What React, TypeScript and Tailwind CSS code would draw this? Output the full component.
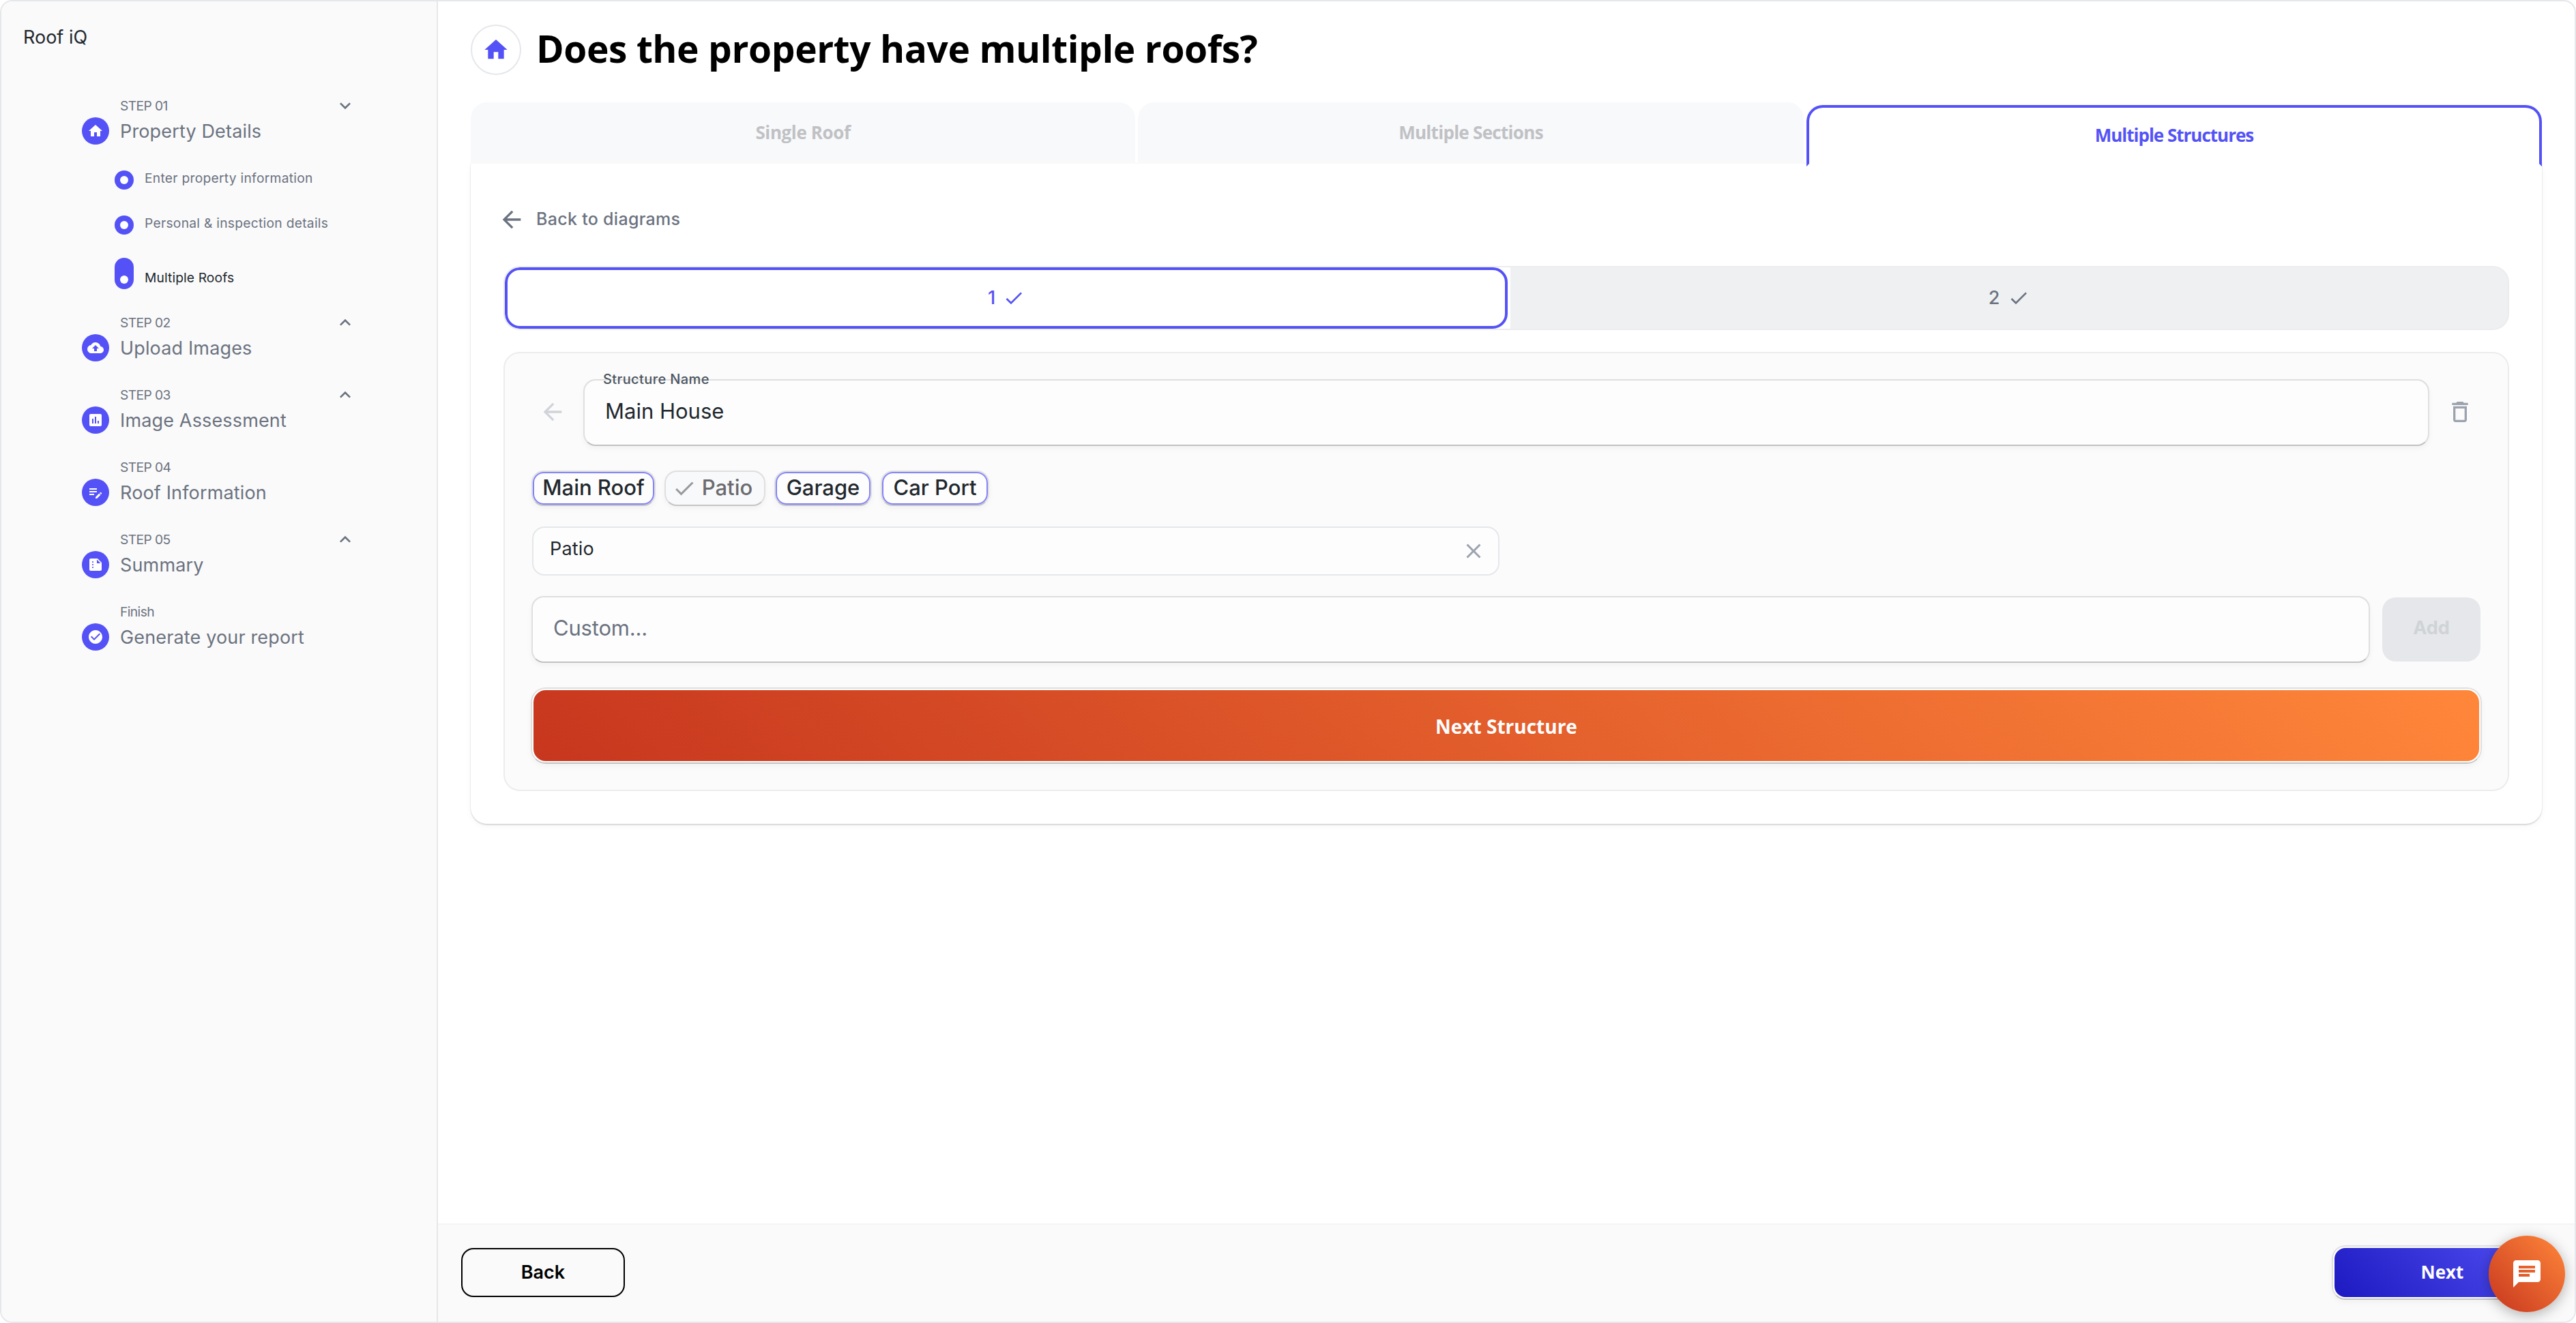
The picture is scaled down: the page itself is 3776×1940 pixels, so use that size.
import type { ReactNode } from "react";
import clsx from "clsx";
import type { IconType } from "react-icons";
import {
  MdArrowBack,
  MdAssessment,
  MdChat,
  MdCheck,
  MdCheckCircle,
  MdClose,
  MdCloudUpload,
  MdDeleteOutline,
  MdEditNote,
  MdExpandLess,
  MdExpandMore,
  MdHome,
  MdSummarize,
} from "react-icons/md";

interface SubStep {
  title: string;
  active?: boolean;
}

interface Step {
  label: string;
  title: string;
  icon: IconType;
  expandable?: boolean;
  children?: SubStep[];
}

const steps: Step[] = [
  {
    label: "STEP 01",
    title: "Property Details",
    icon: MdHome,
    expandable: true,
    children: [
      { title: "Enter property information" },
      { title: "Personal & inspection details" },
      { title: "Multiple Roofs", active: true },
    ],
  },
  { label: "STEP 02", title: "Upload Images", icon: MdCloudUpload, expandable: true },
  { label: "STEP 03", title: "Image Assessment", icon: MdAssessment, expandable: true },
  { label: "STEP 04", title: "Roof Information", icon: MdEditNote },
  { label: "STEP 05", title: "Summary", icon: MdSummarize, expandable: true },
  { label: "Finish", title: "Generate your report", icon: MdCheckCircle },
];

const SubStepItem = ({ title, active }: SubStep) => (
  <li className="flex items-start gap-4">
    <span
      className={clsx(
        "flex w-7 justify-center rounded-full bg-[#5452f6]",
        active ? "h-[46px] items-end pb-2" : "h-7 items-center"
      )}
    >
      <span className="size-3 rounded-full bg-white" />
    </span>
    <span
      className={clsx(
        "text-[19.25px] leading-[22px]",
        active ? "mt-[18px] tracking-[0.1px] text-[#22282e]" : "tracking-[0.26px] text-[#6b7280]"
      )}
    >
      {title}
    </span>
  </li>
);

const StepItem = ({ label, title, icon: Icon, expandable, children }: Step) => {
  const Chevron = children ? MdExpandMore : MdExpandLess;

  return (
    <li>
      <div className="ml-[118px] w-[402px]">
        <div className="flex h-[34px] items-center justify-between pl-14 text-[#6b7280]">
          <span className="text-[19.25px] tracking-[-0.6px]">{label}</span>
          {expandable && <Chevron className="size-8" />}
        </div>
        <div className="flex h-10 items-center gap-4">
          <span className="flex size-10 items-center justify-center rounded-full bg-[#5452f6]">
            <Icon className="size-6 text-white" />
          </span>
          <span className="pt-0.5 text-[27px] tracking-[0.15px] text-[#6b7280]">{title}</span>
        </div>
      </div>
      {children && (
        <ul className="ml-[166px] flex flex-col pt-[38px] [&>li:nth-child(2)]:mt-[38px] [&>li:nth-child(3)]:mt-[34px]">
          {children.map((child) => (
            <SubStepItem key={child.title} {...child} />
          ))}
        </ul>
      )}
    </li>
  );
};

const Sidebar = () => (
  <aside className="w-[640px] shrink-0 border-r-2 border-[#e5e7eb] bg-[#fafafa] pt-[33px]">
    <p className="pl-8 text-[27px] leading-10 text-[#22282e]">Roof iQ</p>
    <ul className="mt-[63px] flex flex-col gap-8">
      {steps.map((step) => (
        <StepItem key={step.label} {...step} />
      ))}
    </ul>
  </aside>
);

const chips = [
  { name: "Main Roof", width: "w-[182px]" },
  { name: "Patio", width: "w-[148px]", added: true },
  { name: "Garage", width: "w-[143px]" },
  { name: "Car Port", width: "w-[159px]" },
];

const Chip = ({ name, width, added }: { name: string; width: string; added?: boolean }) => (
  <button
    className={clsx(
      "h-[52px] rounded-[18px] border-2 border-[#dfdfe0] border-b-[#c4c4c4] text-[31px] font-medium shadow-[0_4px_8px_rgba(0,0,0,0.04)]",
      width,
      added ? "bg-[#f8f9fb] text-[#6b6b6e]" : "bg-[#fdfdfd] text-[#22282e]"
    )}
  >
    <span
      className={clsx(
        "flex h-12 items-center justify-center rounded-2xl pb-[3px] leading-none whitespace-nowrap",
        added ? "pr-2" : "border-2 border-[#8583f8]"
      )}
    >
      {added && <MdCheck className="mt-[3px] mr-2 size-9 shrink-0 text-[#97999c]" />}
      {name}
    </span>
  </button>
);

const Field = ({ className, children }: { className?: string; children: ReactNode }) => (
  <div
    className={clsx(
      "flex h-[98px] flex-1 rounded-[18px] border-2 border-[#dfdfe0] border-b-[#c2c2c2] bg-[#fdfdfd] text-[31px] shadow-[0_4px_8px_rgba(0,0,0,0.04)]",
      className
    )}
  >
    {children}
  </div>
);

const StructureForm = () => (
  <section className="mt-8 h-[644px] rounded-3xl border-2 border-[#ececec] bg-[#fbfbfb] pt-[38px]">
    <div className="flex items-center gap-[25px] px-[50px]">
      <MdArrowBack className="mb-0.5 size-10 text-[#d0d3d8]" />
      <Field className="relative">
        <label className="absolute top-[-14px] left-[27px] text-[20px] leading-6 font-medium tracking-[0.4px] text-[#4b5560]">
          Structure Name
        </label>
        <span className="pt-[25px] pl-[30px] leading-10 text-[#22282e]">Main House</span>
      </Field>
      <MdDeleteOutline className="mb-0.5 size-10 text-[#9ca3af]" />
    </div>

    <div className="mt-9 ml-[39px] flex gap-[13px]">
      {chips.map((chip) => (
        <Chip key={chip.name} {...chip} />
      ))}
    </div>

    <div className="mt-[30px] ml-10 flex h-[72px] w-[1418px] justify-between rounded-[18px] border-2 border-[#e5e7eb] bg-[#fdfdfd] pr-[18px] pl-6">
      <span className="pt-[11px] text-[27px] leading-10 tracking-[0.2px] text-[#22282e]">Patio</span>
      <MdClose className="mt-4 size-9 text-[#9ca3af]" />
    </div>

    <div className="mt-[30px] mr-10 ml-[39px] flex items-center gap-[18px]">
      <Field>
        <span className="pt-[25px] pl-[30px] leading-10 tracking-[-0.2px] text-[#6b7280]">Custom...</span>
      </Field>
      <button className="h-[94px] w-36 rounded-[20px] bg-[#e5e7eb] pb-1 text-[27px] font-bold text-[#d0d3d6]">
        Add
      </button>
    </div>

    <div className="mx-[38px] mt-9 rounded-[22px] border-2 border-[#dfdfe0] border-b-[#c2c2c2] shadow-[0_4px_8px_rgba(0,0,0,0.04)]">
      <button className="block h-[108px] w-full rounded-[20px] border-2 border-white bg-[linear-gradient(45deg,#c7361e,#ff873a)] bg-origin-border pt-0.5 font-['Open_Sans',sans-serif] text-[28px] font-bold text-white">
        Next Structure
      </button>
    </div>
  </section>
);

const StructureTabs = () => (
  <div className="mt-12 flex h-[94px] overflow-hidden rounded-3xl border-2 border-[#ececee] bg-[#eff0f2] text-[27px] font-medium">
    <div className="w-[1474px] bg-white pr-1">
      <button className="flex h-[90px] w-full items-center justify-center gap-[11px] rounded-[22px] border-4 border-[#5452f6] text-[#5452f6]">
        1 <MdCheck className="size-8" />
      </button>
    </div>
    <button className="flex flex-1 items-center justify-center gap-3 text-[#6b7280]">
      2 <MdCheck className="size-8" />
    </button>
  </div>
);

const RoofTabs = () => (
  <div className="relative mt-10 flex h-[90px] gap-1 font-['Open_Sans',sans-serif] text-[26px] font-bold">
    <button className="w-[974px] rounded-t-3xl border-b-4 border-[#f9f9fa] bg-[#f8f9fb] pt-0.5 tracking-[-0.4px] text-[#c0c1c4]">
      Single Roof
    </button>
    <button className="w-[976px] rounded-t-3xl border-b-4 border-[#f9f9fa] bg-[#f8f9fb] pt-0.5 tracking-[-0.7px] text-[#c0c1c4]">
      Multiple Sections
    </button>
    <button className="mt-1 h-[90px] flex-1 rounded-t-3xl border-4 border-[#5452f6] border-b-white bg-white pb-0.5 tracking-[-1px] text-[#5452f6]">
      Multiple Structures
    </button>
  </div>
);

const Footer = () => (
  <footer className="flex h-36 items-center justify-between border-t-2 border-[#f5f5f6] bg-[#fafafa] pr-8 pb-0.5 pl-[34px]">
    <button className="h-[72px] w-60 rounded-[18px] border-2 border-black text-[27px] font-semibold text-black">
      Back
    </button>
    <div className="w-[324px] rounded-[20px] border-2 border-[#dfdfe0] border-b-[#c2c2c2] shadow-[0_4px_8px_rgba(0,0,0,0.04)]">
      <button className="block h-[76px] w-full rounded-[18px] border-2 border-white bg-[linear-gradient(45deg,#1b19bf,#5452f6)] bg-origin-border pb-0.5 font-['Open_Sans',sans-serif] text-[26px] font-bold text-white">
        Next
      </button>
    </div>
  </footer>
);

export default function App() {
  return (
    <div className="relative flex h-[1940px] w-[3776px] overflow-hidden rounded-[18px] border-2 border-[#e5e7eb] bg-white font-['Inter',sans-serif]">
      <Sidebar />
      <div className="flex flex-1 flex-col">
        <main className="flex-1 px-12 pt-[34px]">
          <header className="flex items-center gap-[22px]">
            <span className="flex size-[74px] items-center justify-center rounded-full border-2 border-[#e5e7eb]">
              <MdHome className="size-10 text-[#5452f6]" />
            </span>
            <h1 className="-mt-[5px] font-['Open_Sans',sans-serif] text-[55px] leading-[70px] font-bold tracking-[-0.4px] text-black">
              Does the property have multiple roofs?
            </h1>
          </header>
          <RoofTabs />
          <div className="h-[968px] rounded-b-3xl px-12 pt-[62px] shadow-[0_0_0_1px_rgba(0,0,0,0.03),0_2px_2px_rgba(0,0,0,0.12),0_4px_12px_rgba(0,0,0,0.03)]">
            <button className="-ml-2 flex h-10 items-center gap-4 text-[25px] font-medium tracking-[0.3px] text-[#6b7280]">
              <MdArrowBack className="size-10" />
              Back to diagrams
            </button>
            <StructureTabs />
            <StructureForm />
          </div>
        </main>
        <Footer />
      </div>
      <button className="absolute right-[14px] bottom-[14px] flex size-28 items-center justify-center rounded-full bg-[linear-gradient(45deg,#c7361e,#ff873a)] text-white shadow-[0_4px_20px_rgba(0,0,0,0.3)]">
        <MdChat className="size-12" />
      </button>
    </div>
  );
}
